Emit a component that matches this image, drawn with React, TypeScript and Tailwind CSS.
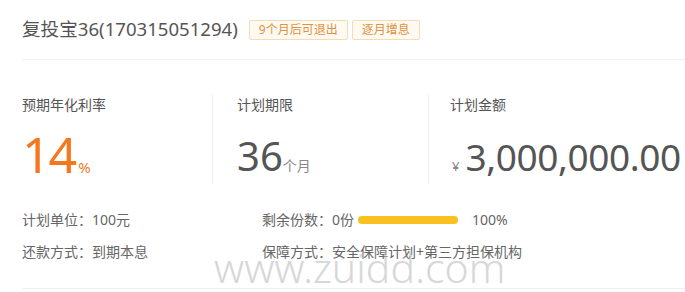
import React from 'react';

const font = { fontFamily: '"Noto Sans", "Noto Sans CJK SC", sans-serif' };

const Tag = ({ label }: { label: string }) => (
    <span className="h-[20px] px-[9px] flex items-center text-[12px] text-[#e0913f] bg-[#fffaf1] border border-[#f6dcb5] rounded-[2px]">
        {label}
    </span>
);

export default function App() {
    return (
        <div className="relative w-[685px] h-[292px] bg-white overflow-hidden pl-[22px]" style={font}>
            {/* 标题 */}
            <div className="h-[60px] flex items-center gap-[4px] border-b border-[#f2f2f2]">
                <h1 className="text-[18.6px] text-[#555] mr-[7px] leading-none">复投宝36(170315051294)</h1>
                <Tag label="9个月后可退出" />
                <Tag label="逐月增息" />
            </div>

            {/* 数据 */}
            <div className="flex mt-[35px] h-[89px]">
                <div className="w-[190px] flex flex-col">
                    <span className="text-[14px] text-[#555] leading-[20px]">预期年化利率</span>
                    <div className="flex items-baseline text-[#f5781f] mt-[14px] leading-none">
                        <span className="text-[50px] tracking-[-2px]">14</span>
                        <span className="text-[15px] ml-[3px]">%</span>
                    </div>
                </div>
                <div className="w-[216px] border-l border-[#f0f0f0] pl-[24px] flex flex-col">
                    <span className="text-[14px] text-[#555] leading-[20px]">计划期限</span>
                    <div className="flex items-baseline text-[#555] mt-[21px] leading-none">
                        <span className="text-[40px]">36</span>
                        <span className="text-[14px] text-[#888]">个月</span>
                    </div>
                </div>
                <div className="flex-1 border-l border-[#f0f0f0] pl-[21px] flex flex-col">
                    <span className="text-[14px] text-[#555] leading-[20px]">计划金额</span>
                    <div className="flex items-baseline text-[#555] mt-[23px] leading-none">
                        <span className="text-[13px] text-[#888] ml-[2px] mr-[6px]">¥</span>
                        <span className="text-[37px] tracking-[-0.4px]">3,000,000.00</span>
                    </div>
                </div>
            </div>

            {/* 详情 */}
            <div className="flex flex-col gap-[12px] mt-[26px] text-[14px] text-[#666] leading-[20px]">
                <div className="flex">
                    <span className="w-[240px]">计划单位：100元</span>
                    <span className="flex items-center">
                        剩余份数：0份
                        <span className="ml-[4px] w-[100px] h-[8px] rounded-full bg-[#f9c021]" />
                        <span className="ml-[14px]">100%</span>
                    </span>
                </div>
                <div className="flex">
                    <span className="w-[240px]">还款方式：到期本息</span>
                    <span>保障方式：安全保障计划+第三方担保机构</span>
                </div>
            </div>

            <div className="absolute left-[22px] right-0 top-[288px] border-t border-[#f0f0f0]" />

            {/* 水印 */}
            <span className="absolute left-[214px] top-[246px] text-[41px] leading-[42px] text-[#bdbdbd] opacity-60 font-light pointer-events-none">
                www.zuidd.com
            </span>
        </div>
    );
}
